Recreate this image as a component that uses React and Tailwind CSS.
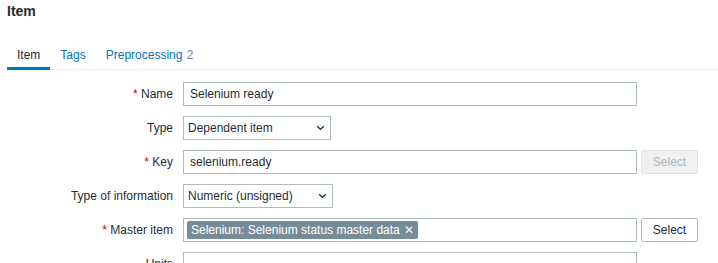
import React from "react";

function Label({ required, children }) {
  return (
    <div className="w-[173px] shrink-0 text-right leading-[14px]">
      {required && <span className="text-[#d40000]">* </span>}
      {children}
    </div>
  );
}

function Chevron() {
  return (
    <svg width="9" height="6" viewBox="0 0 9 6" className="shrink-0">
      <path d="M1.2 1.3 L4.5 4.4 L7.8 1.3" fill="none" stroke="#1f2c33" strokeWidth="1.4" />
    </svg>
  );
}

function SelectBox({ value, width }) {
  return (
    <div
      className={`ml-[10px] h-[24px] ${width} border border-[#acbbc2] bg-white flex items-center justify-between pl-[4px] pr-[5px]`}
    >
      <span>{value}</span>
      <Chevron />
    </div>
  );
}

function TextInput({ value }) {
  return (
    <div className="ml-[10px] h-[24px] w-[454px] border border-[#acbbc2] bg-white flex items-center px-[6px]">
      {value}
    </div>
  );
}

function Button({ disabled }) {
  return (
    <div
      className={`ml-[4px] h-[24px] w-[57px] flex items-center justify-center border rounded-[2px] ${
        disabled
          ? "border-[#dfe4e7] bg-[#f0f0f0] text-[#acbbc2]"
          : "border-[#acbbc2] bg-white text-[#1f2c33]"
      }`}
    >
      Select
    </div>
  );
}

export default function App() {
  return (
    <div
      className="w-[718px] h-[263px] overflow-hidden bg-white text-[#1f2c33] text-[12px]"
      style={{ fontFamily: '"Liberation Sans", Arial, sans-serif' }}
    >
      <div className="pl-[7px] pt-[3px]">
        <h1 className="text-[14px] leading-[16px] font-bold">Item</h1>
      </div>

      <div className="ml-[7px] mt-[28px] flex border-b border-[#ebeef0] h-[23px]">
        <div className="px-[10px] h-[23px] pt-[1px] leading-[14px] border-b-[3px] border-[#0275b8] text-[#1f2c33] mb-[-2px]">
          Item
        </div>
        <div className="px-[10px] pt-[1px] leading-[14px] text-[#0275b8]">Tags</div>
        <div className="px-[10px] pt-[1px] leading-[14px] text-[#0275b8]">
          Preprocessing <span className="text-[#768d99] ml-[1px]">2</span>
        </div>
      </div>

      <div className="mt-[12px] flex flex-col gap-[10px]">
        <div className="flex items-center">
          <Label required>Name</Label>
          <TextInput value="Selenium ready" />
        </div>
        <div className="flex items-center">
          <Label>Type</Label>
          <SelectBox value="Dependent item" width="w-[148px]" />
        </div>
        <div className="flex items-center">
          <Label required>Key</Label>
          <TextInput value="selenium.ready" />
          <Button disabled />
        </div>
        <div className="flex items-center">
          <Label>Type of information</Label>
          <SelectBox value="Numeric (unsigned)" width="w-[150px]" />
        </div>
        <div className="flex items-center">
          <Label required>Master item</Label>
          <div className="ml-[10px] h-[24px] w-[454px] border border-[#acbbc2] bg-white flex items-center pl-[3px]">
            <div className="h-[18px] rounded-[2px] bg-[#768d99] text-white flex items-center pl-[4px] pr-[4px]">
              Selenium: Selenium status master data
              <span className="ml-[4px] text-[12px] leading-none">✕</span>
            </div>
          </div>
          <Button />
        </div>
        <div className="flex items-center">
          <Label>Units</Label>
          <TextInput value="" />
        </div>
      </div>
    </div>
  );
}
